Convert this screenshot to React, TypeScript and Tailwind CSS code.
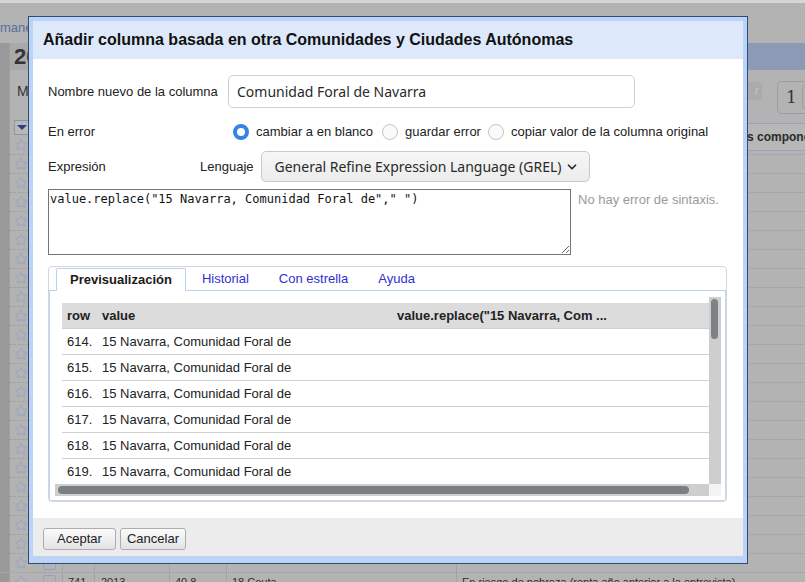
import React from 'react';
import { ChevronDown } from 'lucide-react';

const previewRows = ['614.', '615.', '616.', '617.', '618.', '619.'];
const leftRows = Array.from({ length: 22 });
const rightRows = Array.from({ length: 21 });

function Star() {
  return (
    <svg width="15" height="14" viewBox="0 0 24 24" fill="none" stroke="#93a3c6" strokeWidth="1.6" strokeLinejoin="round">
      <polygon points="12 2 15.09 8.26 22 9.27 17 14.14 18.18 21.02 12 17.77 5.82 21.02 7 14.14 2 9.27 8.91 8.26 12 2" />
    </svg>
  );
}

function Radio({ checked }: { checked?: boolean }) {
  return checked ? (
    <span className="w-[16px] h-[16px] rounded-full border-[4px] border-[#3584e4] bg-white shrink-0" />
  ) : (
    <span className="w-[16px] h-[16px] rounded-full border border-[#c4c4c4] bg-[#fafafa] shrink-0" />
  );
}

// one row of the data table behind the dialog; only its edges stay visible
function BgRow({ raised }: { raised?: boolean }) {
  const cell = raised ? '-mt-[4px]' : 'pt-[2px]';
  return (
    <div className="flex h-[19px] border-b border-dotted border-[#9c9c9c] text-[11px] text-[#2e2e2e] leading-[15px] whitespace-nowrap">
      <div className="w-[9px] bg-[#999999] shrink-0" />
      <div className="w-[19px] pl-[4px] flex items-center shrink-0 border-l border-[#a0a0a0]"><Star /></div>
      <div className="w-[35px] pl-[15px] pt-[2px] border-r border-[#a3a3a3] shrink-0">
        <div className="w-[13px] h-[14px] border border-[#93a3c6] rounded-[2px]" />
      </div>
      <div className={`w-[32px] pl-[5px] border-r border-[#a3a3a3] shrink-0 ${cell}`}>741</div>
      <div className={`w-[75px] pl-[6px] border-r border-[#a3a3a3] shrink-0 ${cell}`}>2013</div>
      <div className={`w-[57px] pl-[5px] border-r border-[#a3a3a3] shrink-0 ${cell}`}>40.8</div>
      <div className={`w-[230px] pl-[5px] border-r border-[#a3a3a3] shrink-0 ${cell}`}>18 Ceuta</div>
      <div className={`flex-1 pl-[5px] ${cell}`}>En riesgo de pobreza (renta año anterior a la entrevista)</div>
    </div>
  );
}

export default function App() {
  return (
    <div className="relative w-[805px] h-[582px] overflow-hidden bg-[#b3b3b3] font-['Liberation_Sans',Arial,sans-serif] text-[13px] text-[#222]">
      {/* page behind the dialog, dimmed */}
      <div className="h-[3px] bg-[#d5d5d5]" />
      <div className="h-[40px] pt-[17px] text-[13px] text-[#56709e] leading-[16px]">manera de leer la tabla</div>
      <div className="flex h-[74px]">
        <div className="w-[9px] bg-[#999999] shrink-0" />
        <div className="flex-1 flex flex-col border-l border-[#a0a0a0]">
          <div className="h-[27px] flex">
            <div className="w-[520px] bg-[#a9a9a9] pl-[4px] text-[22px] font-bold text-[#333] leading-[27px]">2013 Encuesta</div>
            <div className="flex-1 bg-[#8d9ab6]" />
          </div>
          <div className="h-[47px] flex items-start pt-[11px] pl-[7px]">
            <span className="text-[14px] text-[#333]">Mostrar</span>
            <div className="ml-auto -mr-[14px] flex items-start gap-[15px] mt-[1px]">
              <span className="w-[18px] h-[18px] rounded-[3px] bg-[#ababab] text-[#c2c2c2] text-[13px] leading-[18px] text-right pr-[3px]">r</span>
              <span className="w-[42px] h-[33px] -mt-[1px] border border-[#9d9d9d] rounded-[5px] pl-[8px] text-[17px] leading-[31px] text-[#333] font-['DejaVu_Serif',serif] flex">
                1
                <span className="ml-[5px] mt-[3px] w-[9px] h-[24px] border border-[#9d9d9d] rounded-[3px]" />
              </span>
            </div>
          </div>
        </div>
      </div>
      <div className="flex h-[437px]">
        <div className="w-[9px] bg-[#999999] shrink-0" />
        <div className="w-[19px] flex flex-col shrink-0 border-l border-[#a0a0a0]">
          <div className="h-[19px] pt-[3px] pl-[4px]">
            <div className="w-[15px] h-[15px] border border-[#8a94ad] bg-[#b9b9b9] flex items-center justify-center">
              <div className="w-0 h-0 border-l-[5px] border-r-[5px] border-t-[5px] border-l-transparent border-r-transparent border-t-[#2e3f8a]" />
            </div>
          </div>
          {leftRows.map((_, i) => (
            <div key={i} className="h-[19px] pl-[4px] flex items-center border-b border-dotted border-[#9c9c9c]">
              <Star />
            </div>
          ))}
        </div>
        <div className="flex-1" />
        <div className="w-[58px] flex flex-col shrink-0">
          <div className="h-[28px] mt-[6px] border-t border-b border-[#98a2b8] bg-[#b7b7b7] flex items-center font-bold text-[12px] text-[#2a2a2a] overflow-hidden whitespace-nowrap">
            <span>s componentes</span>
          </div>
          <div className="h-[4px] border-b border-dotted border-[#9c9c9c]" />
          {rightRows.map((_, i) => (
            <div key={i} className="h-[19px] border-b border-dotted border-[#9c9c9c]" />
          ))}
        </div>
      </div>
      <BgRow raised />
      <BgRow />

      {/* dialog */}
      <div className="absolute left-[28px] top-[16px] w-[720px] h-[548px] border border-[#2f4c7a] bg-[#bcd3f6] px-[4px] pt-[4px] pb-[7px] flex flex-col">
        <div className="h-[38px] bg-[#dde9fb] pl-[10px] text-[16px] font-bold leading-[38px] text-[#111] whitespace-nowrap">
          Añadir columna basada en otra Comunidades y Ciudades Autónomas
        </div>
        <div className="flex-1 bg-white pl-[15px] pr-[16px] pt-[16px] flex flex-col">
          <div className="flex items-center h-[33px]">
            <span className="w-[180px]">Nombre nuevo de la columna</span>
            <div className="w-[407px] h-[33px] border border-[#cfcfcf] rounded-[5px] pl-[8px] flex items-center text-[14px] text-[#2a2a2a] font-['Noto_Sans',sans-serif] whitespace-nowrap">
              Comunidad Foral de Navarra
            </div>
          </div>
          <div className="flex items-center h-[20px] mt-[14px]">
            <span className="w-[185px]">En error</span>
            <label className="flex items-center gap-[7px] mr-[9px]"><Radio checked /><span>cambiar a en blanco</span></label>
            <label className="flex items-center gap-[7px] mr-[7px]"><Radio /><span>guardar error</span></label>
            <label className="flex items-center gap-[7px]"><Radio /><span>copiar valor de la columna original</span></label>
          </div>
          <div className="flex items-center h-[31px] mt-[9px]">
            <span className="w-[152px]">Expresión</span>
            <span>Lenguaje</span>
            <div className="ml-[7px] w-[329px] h-[31px] border border-[#c9c9c9] rounded-[5px] bg-[linear-gradient(#f6f6f6,#ececec)] pl-[13px] pr-[10px] flex items-center justify-between text-[14px] text-[#2a2a2a] font-['Noto_Sans',sans-serif] whitespace-nowrap">
              <span>General Refine Expression Language (GREL)</span>
              <ChevronDown className="w-[14px] h-[14px]" strokeWidth={3} />
            </div>
          </div>
          <div className="flex items-start mt-[7px]">
            <textarea
              readOnly
              value={'value.replace("15 Navarra, Comunidad Foral de"," ")'}
              className="w-[523px] h-[66px] border border-[#767676] px-[1px] py-[2px] font-['DejaVu_Sans_Mono',monospace] text-[12px] leading-[15px] text-[#111] resize-y outline-none"
            />
            <span className="ml-[7px] mt-[1px] text-[13px] text-[#9a9a9a]">No hay error de sintaxis.</span>
          </div>
          <div className="mt-[11px] h-[236px] border border-[#d6d6d6] rounded-[4px] pt-[1px] flex flex-col">
            <div className="flex pl-[7px] h-[22px] gap-[2px]">
              <div className="relative z-10 h-[23px] px-[13px] border border-[#bcd0f3] border-b-0 bg-white rounded-t-[2px] font-bold flex items-center text-[#1a1a1a]">Previsualización</div>
              <div className="px-[14px] flex items-center text-[#2f2fd3]">Historial</div>
              <div className="px-[14px] flex items-center text-[#2f2fd3]">Con estrella</div>
              <div className="px-[14px] flex items-center text-[#2f2fd3]">Ayuda</div>
            </div>
            <div className="flex-1 border border-[#c3d4f5] border-t-[#bcd0f3] pt-[6px] pl-[5px] pr-[5px] pb-[4px]">
              <div className="w-[666px] h-[199px] grid grid-cols-[654px_12px] grid-rows-[187px_12px]">
                <div className="overflow-hidden pl-[7px] pt-[6px]">
                  <div className="flex h-[26px] bg-[#dcdcdc] border-b border-[#cfcfcf] items-center font-bold whitespace-nowrap">
                    <span className="w-[35px] pl-[5px]">row</span>
                    <span className="w-[295px] pl-[5px]">value</span>
                    <span className="pl-[5px]">value.replace("15 Navarra, Com ...</span>
                  </div>
                  {previewRows.map(r => (
                    <div key={r} className="flex h-[26px] border-b border-[#cfcfcf] items-center whitespace-nowrap">
                      <span className="w-[35px] pl-[5px]">{r}</span>
                      <span className="w-[295px] pl-[5px]">15 Navarra, Comunidad Foral de</span>
                      <span className="pl-[5px]" />
                    </div>
                  ))}
                </div>
                <div className="bg-[#cecece] pt-[2px] pl-[2px]">
                  <div className="w-[7px] h-[40px] rounded-full bg-[#7e8285]" />
                </div>
                <div className="bg-[#cecece] pt-[2px] pl-[3px]">
                  <div className="w-[631px] h-[8px] rounded-full bg-[#7b7f81]" />
                </div>
                <div className="bg-[#f3f3f3]" />
              </div>
            </div>
          </div>
        </div>
        <div className="h-[38px] bg-[#ececec] pl-[10px] pt-[10px] flex items-start gap-[4px]">
          <button className="h-[22px] w-[73px] border border-[#adadad] rounded-[3px] bg-[linear-gradient(#fbfbfb,#e3e3e3)] text-[13px] text-[#222]">Aceptar</button>
          <button className="h-[22px] w-[66px] border border-[#adadad] rounded-[3px] bg-[linear-gradient(#fbfbfb,#e3e3e3)] text-[13px] text-[#222]">Cancelar</button>
        </div>
      </div>
    </div>
  );
}
